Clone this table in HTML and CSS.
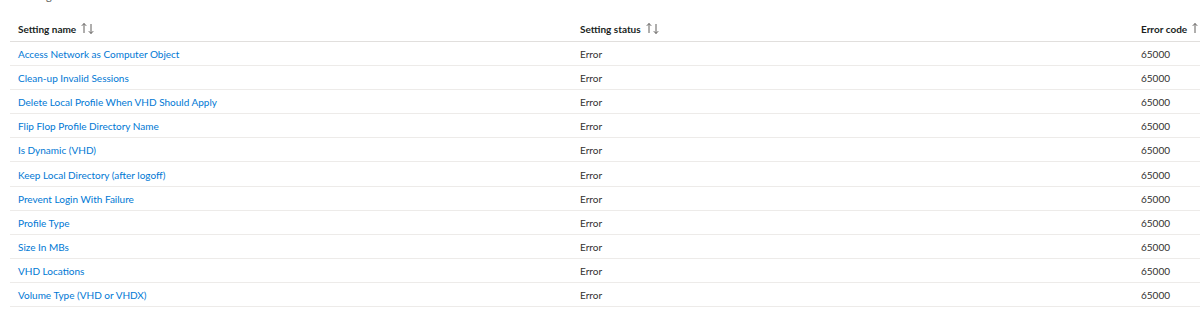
FILE: index.html
```html
<!DOCTYPE html>
<html>
<head>
<meta charset="utf-8">
<link rel="stylesheet" href="styles.css">
</head>
<body>
<div class="page">
  <div class="clipped"><span>Setting details</span></div>
  <div class="grid">
    <div class="row head">
      <div class="cell c1">Setting name <svg class="sort" width="14" height="13" viewBox="0 0 14 13"><path d="M3 11V1.5M0.8 3.8L3 1.5L5.2 3.8M10 2v9.5M7.8 9.2L10 11.5L12.2 9.2" fill="none" stroke="#605e5c" stroke-width="1"/></svg></div>
      <div class="cell c2">Setting status <svg class="sort" width="14" height="13" viewBox="0 0 14 13"><path d="M3 11V1.5M0.8 3.8L3 1.5L5.2 3.8M10 2v9.5M7.8 9.2L10 11.5L12.2 9.2" fill="none" stroke="#605e5c" stroke-width="1"/></svg></div>
      <div class="cell c3">Error code <svg class="sort" width="14" height="13" viewBox="0 0 14 13"><path d="M3 11V1.5M0.8 3.8L3 1.5L5.2 3.8" fill="none" stroke="#605e5c" stroke-width="1"/></svg></div>
    </div>
    <div class="row"><div class="cell c1"><a>Access Network as Computer Object</a></div><div class="cell c2">Error</div><div class="cell c3">65000</div></div>
    <div class="row"><div class="cell c1"><a>Clean-up Invalid Sessions</a></div><div class="cell c2">Error</div><div class="cell c3">65000</div></div>
    <div class="row"><div class="cell c1"><a>Delete Local Profile When VHD Should Apply</a></div><div class="cell c2">Error</div><div class="cell c3">65000</div></div>
    <div class="row"><div class="cell c1"><a>Flip Flop Profile Directory Name</a></div><div class="cell c2">Error</div><div class="cell c3">65000</div></div>
    <div class="row"><div class="cell c1"><a>Is Dynamic (VHD)</a></div><div class="cell c2">Error</div><div class="cell c3">65000</div></div>
    <div class="row"><div class="cell c1"><a>Keep Local Directory (after logoff)</a></div><div class="cell c2">Error</div><div class="cell c3">65000</div></div>
    <div class="row"><div class="cell c1"><a>Prevent Login With Failure</a></div><div class="cell c2">Error</div><div class="cell c3">65000</div></div>
    <div class="row"><div class="cell c1"><a>Profile Type</a></div><div class="cell c2">Error</div><div class="cell c3">65000</div></div>
    <div class="row"><div class="cell c1"><a>Size In MBs</a></div><div class="cell c2">Error</div><div class="cell c3">65000</div></div>
    <div class="row"><div class="cell c1"><a>VHD Locations</a></div><div class="cell c2">Error</div><div class="cell c3">65000</div></div>
    <div class="row"><div class="cell c1"><a>Volume Type (VHD or VHDX)</a></div><div class="cell c2">Error</div><div class="cell c3">65000</div></div>
  </div>
</div>
</body>
</html>
```
FILE: styles.css
```css
html, body {
  margin: 0;
  padding: 0;
  background: #ffffff;
  overflow: hidden;
}
.page {
  width: 1200px;
  height: 328px;
  overflow: hidden;
  font-family: Lato, "Open Sans", sans-serif;
  font-size: 10px;
  color: #323130;
}
.clipped {
  height: 4px;
  overflow: hidden;
  margin-left: 18px;
  margin-bottom: 10px;
}
.clipped span {
  display: block;
  margin-top: -11px;
  line-height: 14px;
  font-size: 11px;
  color: #605e5c;
}
.grid {
  margin-left: 10px;
  width: 1260px;
}
.row {
  display: grid;
  grid-template-columns: 562px 561px 1fr;
  height: 23.1px;
  align-items: center;
  border-bottom: 1px solid #edebe9;
}
.row.head {
  height: 27px;
  font-weight: 700;
  color: #201f1e;
  border-bottom: 1px solid #e1dfdd;
}
.cell {
  padding-left: 8px;
  padding-top: 1px;
  white-space: nowrap;
  display: flex;
  align-items: center;
}
.head .cell {
  padding-top: 2px;
}
.sort {
  margin-left: 5px;
}
a {
  color: #0078d4;
  text-decoration: none;
}
```
